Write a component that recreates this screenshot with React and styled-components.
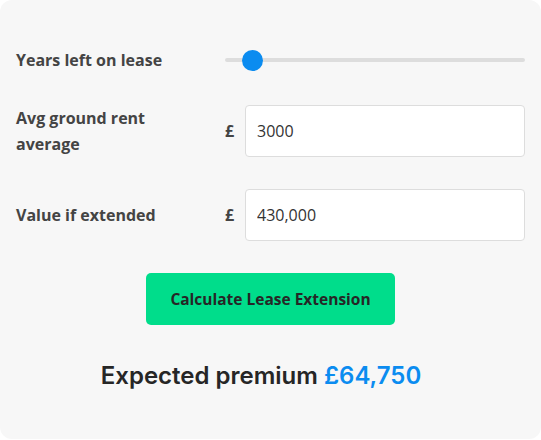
import { useState } from "react"
import styled, { createGlobalStyle } from "styled-components"

const GlobalStyle = createGlobalStyle`
  html, body {
    margin: 0;
    padding: 0;
    background: #ffffff;
  }
  body {
    font-family: "Open Sans", "Liberation Sans", sans-serif;
  }
`

export default function App(){
  const [years, setYears] = useState(6)
  const [rent, setRent] = useState("3000")
  const [value, setValue] = useState("430,000")
  return (
    <>
      <GlobalStyle />
      <Card>
        <Row $gap={19}>
          <Label>Years left on lease</Label>
          <SliderCell>
            <Range
              type="range"
              min="0"
              max="100"
              value={years}
              onChange={(e) => setYears(e.target.value)}
            />
          </SliderCell>
        </Row>
        <Row $gap={32}>
          <Label>Avg ground rent average</Label>
          <Pound>£</Pound>
          <Input value={rent} onChange={(e) => setRent(e.target.value)} />
        </Row>
        <Row $gap={32}>
          <Label>Value if extended</Label>
          <Pound>£</Pound>
          <Input value={value} onChange={(e) => setValue(e.target.value)} />
        </Row>
        <ButtonRow>
          <Button type="button">Calculate Lease Extension</Button>
        </ButtonRow>
        <Result>
          Expected premium <Amount>£64,750</Amount>
        </Result>
      </Card>
    </>
  )
}

const Card = styled.div`
  box-sizing: border-box;
  width: 541px;
  height: 439px;
  background: #f7f7f7;
  border-radius: 12px;
  padding: 34px 16px 0 16px;
  display: flex;
  flex-direction: column;
`

const Row = styled.div`
  display: grid;
  grid-template-columns: 200px 29px 1fr;
  align-items: center;
  min-height: 52px;
  margin-bottom: ${props => props.$gap}px;
`

const Label = styled.div`
  font-size: 16px;
  font-weight: 700;
  line-height: 26px;
  color: #444444;
  padding-right: 30px;
`

const SliderCell = styled.div`
  grid-column: 2 / 4;
  margin-left: 9px;
  display: flex;
  align-items: center;
`

const Range = styled.input`
  appearance: none;
  -webkit-appearance: none;
  width: 100%;
  height: 4px;
  margin: 0;
  background: #dddddd;
  border-radius: 2px;
  outline: none;
  &::-webkit-slider-thumb {
    -webkit-appearance: none;
    width: 21px;
    height: 21px;
    border-radius: 50%;
    background: #0b8cf0;
    border: none;
    cursor: pointer;
  }
  &::-moz-range-thumb {
    width: 21px;
    height: 21px;
    border-radius: 50%;
    background: #0b8cf0;
    border: none;
  }
`

const Pound = styled.span`
  font-size: 16px;
  font-weight: 700;
  color: #444444;
  justify-self: start;
  padding-left: 9px;
`

const Input = styled.input`
  box-sizing: border-box;
  width: 100%;
  height: 52px;
  border: 1px solid #dddddd;
  border-radius: 4px;
  background: #ffffff;
  padding: 0 11px;
  font-family: "Open Sans", "Liberation Sans", sans-serif;
  font-size: 16px;
  color: #333333;
  outline: none;
`

const ButtonRow = styled.div`
  display: flex;
  justify-content: center;
`

const Button = styled.button`
  height: 52px;
  padding: 0 24px;
  border: none;
  border-radius: 5px;
  background: #00dd8b;
  font-family: "Open Sans", "Liberation Sans", sans-serif;
  font-size: 15.5px;
  font-weight: 700;
  color: #262626;
  cursor: pointer;
`

const Result = styled.div`
  margin-top: 36px;
  text-align: center;
  font-family: Inter, "Open Sans", sans-serif;
  font-size: 24px;
  font-weight: 600;
  color: #262626;
  padding-right: 19px;
`

const Amount = styled.span`
  color: #0b8cf0;
`
